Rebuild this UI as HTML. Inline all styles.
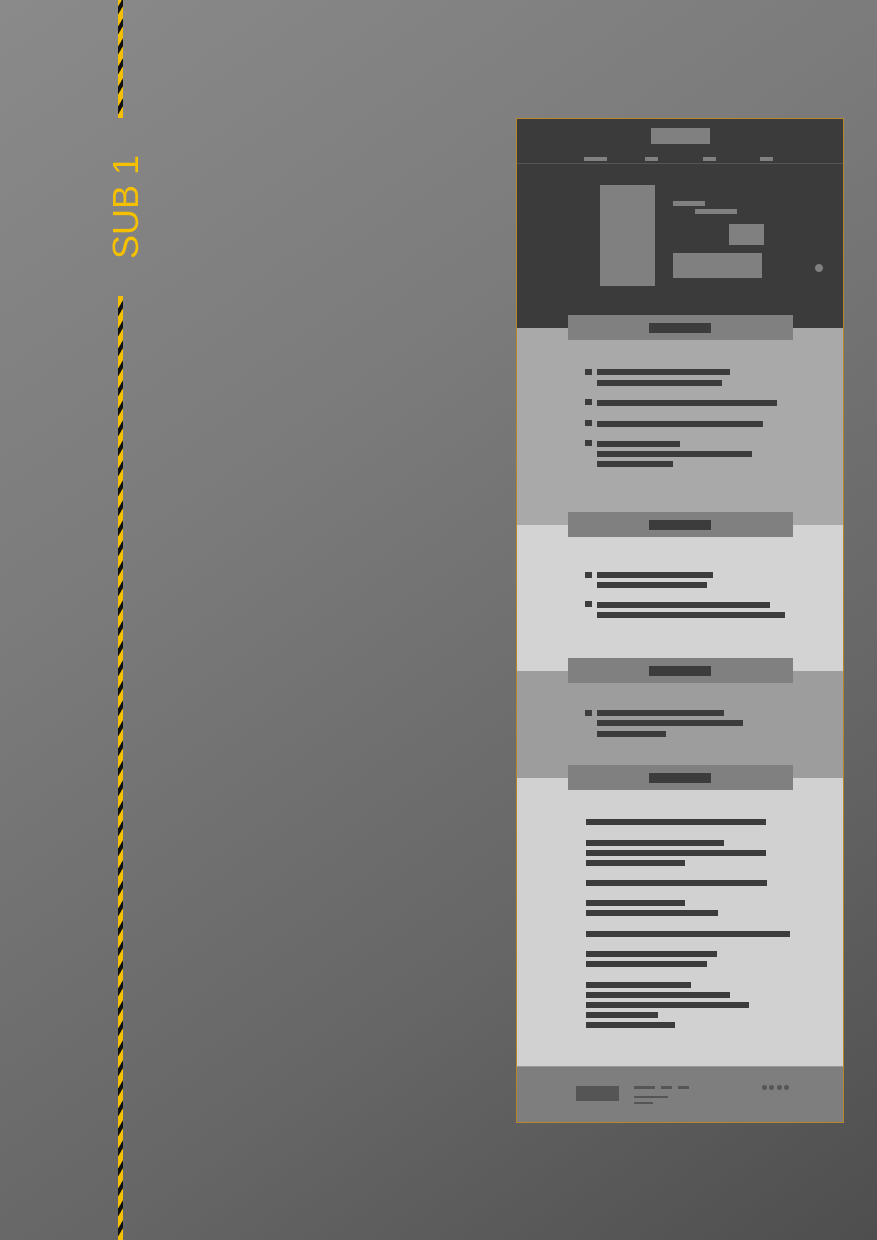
<!DOCTYPE html>
<html><head><meta charset="utf-8"><style>
*{margin:0;padding:0;box-sizing:border-box}
html,body{width:877px;height:1240px;overflow:hidden}
body{position:relative;background:linear-gradient(145deg,#8a8a8a 0%,#7b7b7b 35%,#666 70%,#4e4e4e 100%);font-family:"Liberation Sans",sans-serif}
div{position:absolute}
.h{left:118px;width:5px;background:repeating-linear-gradient(-60deg,#f5c000 0 6px,#111 6px 10px)}
.g{background:#808080}
.d{background:#3c3c3c;height:6px}
.b{background:#3c3c3c;width:7px;height:6px;left:585px}
.s{left:517px;width:326px}
</style></head><body>
<div class="h" style="top:0;height:118px"></div>
<div class="h" style="top:296px;height:944px"></div>
<div style="left:126px;top:207px;transform:translate(-50%,-50%) rotate(-90deg);color:#f5c000;font-size:36px;white-space:nowrap;line-height:1">SUB 1</div>

<div style="left:516px;top:118px;width:328px;height:1005px;border:1px solid #b8862b;background:#3b3b3b"></div>
<div class="s" style="top:119px;height:209px;background:#3b3b3b"></div>
<div style="left:517px;top:163px;width:326px;height:1px;background:#555"></div>
<div class="g" style="left:651px;top:128px;width:59px;height:16px"></div>
<div class="g" style="left:584px;top:157px;width:23px;height:4px"></div>
<div class="g" style="left:645px;top:157px;width:13px;height:4px"></div>
<div class="g" style="left:703px;top:157px;width:13px;height:4px"></div>
<div class="g" style="left:760px;top:157px;width:13px;height:4px"></div>
<div class="g" style="left:600px;top:185px;width:55px;height:101px"></div>
<div class="g" style="left:673px;top:201px;width:32px;height:5px"></div>
<div class="g" style="left:695px;top:209px;width:42px;height:5px"></div>
<div class="g" style="left:729px;top:224px;width:35px;height:21px"></div>
<div class="g" style="left:673px;top:253px;width:89px;height:25px"></div>
<div class="g" style="left:815px;top:264px;width:8px;height:8px;border-radius:50%"></div>
<div class="s" style="top:328px;height:197px;background:#a9a9a9"></div>
<div class="s" style="top:525px;height:146px;background:#d3d3d3"></div>
<div class="s" style="top:671px;height:107px;background:#9d9d9d"></div>
<div class="s" style="top:778px;height:288px;background:#d1d1d1"></div>
<div class="s" style="top:1066px;height:56px;background:#7e7e7e;border-top:1px solid #999"></div>
<div class="g" style="left:568px;top:315px;width:225px;height:25px"></div><div class="d" style="left:649px;top:323px;width:62px;height:10px"></div>
<div class="g" style="left:568px;top:512px;width:225px;height:25px"></div><div class="d" style="left:649px;top:520px;width:62px;height:10px"></div>
<div class="g" style="left:568px;top:658px;width:225px;height:25px"></div><div class="d" style="left:649px;top:666px;width:62px;height:10px"></div>
<div class="g" style="left:568px;top:765px;width:225px;height:25px"></div><div class="d" style="left:649px;top:773px;width:62px;height:10px"></div>
<div class="b" style="top:369px"></div><div class="d" style="left:597px;top:369px;width:133px"></div><div class="d" style="left:597px;top:380px;width:125px"></div>
<div class="b" style="top:399px"></div><div class="d" style="left:597px;top:400px;width:180px"></div>
<div class="b" style="top:420px"></div><div class="d" style="left:597px;top:421px;width:166px"></div>
<div class="b" style="top:440px"></div><div class="d" style="left:597px;top:441px;width:83px"></div><div class="d" style="left:597px;top:451px;width:155px"></div><div class="d" style="left:597px;top:461px;width:76px"></div>
<div class="b" style="top:572px"></div><div class="d" style="left:597px;top:572px;width:116px"></div><div class="d" style="left:597px;top:582px;width:110px"></div>
<div class="b" style="top:601px"></div><div class="d" style="left:597px;top:602px;width:173px"></div><div class="d" style="left:597px;top:612px;width:188px"></div>
<div class="b" style="top:710px"></div><div class="d" style="left:597px;top:710px;width:127px"></div><div class="d" style="left:597px;top:720px;width:146px"></div><div class="d" style="left:597px;top:731px;width:69px"></div>
<div class="d" style="left:586px;top:819px;width:180px"></div>
<div class="d" style="left:586px;top:840px;width:138px"></div>
<div class="d" style="left:586px;top:850px;width:180px"></div>
<div class="d" style="left:586px;top:860px;width:99px"></div>
<div class="d" style="left:586px;top:880px;width:181px"></div>
<div class="d" style="left:586px;top:900px;width:99px"></div>
<div class="d" style="left:586px;top:910px;width:132px"></div>
<div class="d" style="left:586px;top:931px;width:204px"></div>
<div class="d" style="left:586px;top:951px;width:131px"></div>
<div class="d" style="left:586px;top:961px;width:121px"></div>
<div class="d" style="left:586px;top:982px;width:105px"></div>
<div class="d" style="left:586px;top:992px;width:144px"></div>
<div class="d" style="left:586px;top:1002px;width:163px"></div>
<div class="d" style="left:586px;top:1012px;width:72px"></div>
<div class="d" style="left:586px;top:1022px;width:89px"></div>
<div style="left:576px;top:1086px;width:43px;height:15px;background:#555"></div>
<div style="left:634px;top:1086px;width:21px;height:3px;background:#555"></div>
<div style="left:661px;top:1086px;width:11px;height:3px;background:#555"></div>
<div style="left:678px;top:1086px;width:11px;height:3px;background:#555"></div>
<div style="left:634px;top:1096px;width:34px;height:2px;background:#555"></div>
<div style="left:634px;top:1102px;width:19px;height:2px;background:#555"></div>
<div style="left:762px;top:1085px;width:5px;height:5px;border-radius:50%;background:#555"></div>
<div style="left:769px;top:1085px;width:5px;height:5px;border-radius:50%;background:#555"></div>
<div style="left:777px;top:1085px;width:5px;height:5px;border-radius:50%;background:#555"></div>
<div style="left:784px;top:1085px;width:5px;height:5px;border-radius:50%;background:#555"></div>
</body></html>
